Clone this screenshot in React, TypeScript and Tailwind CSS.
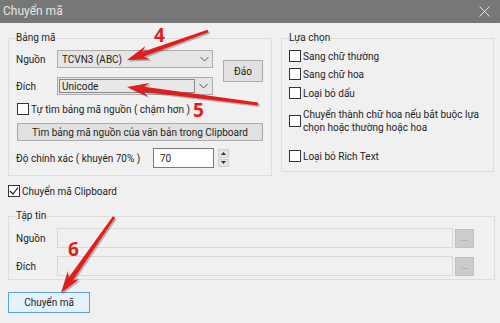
import React from "react";

function arrowPoints(
  x1: number, y1: number, x2: number, y2: number,
  w1: number, w2: number, hl: number, hw: number, notch: number
) {
  const dx = x2 - x1, dy = y2 - y1;
  const L = Math.hypot(dx, dy);
  const ux = dx / L, uy = dy / L;
  const nx = -uy, ny = ux;
  const bx = x2 - ux * hl, by = y2 - uy * hl;
  const kx = bx + ux * notch, ky = by + uy * notch;
  const p = (x: number, y: number) => `${x.toFixed(1)},${y.toFixed(1)}`;
  return [
    p(x1 + nx * w1 / 2, y1 + ny * w1 / 2),
    p(kx + nx * w2 / 2, ky + ny * w2 / 2),
    p(bx + nx * hw / 2, by + ny * hw / 2),
    p(x2, y2),
    p(bx - nx * hw / 2, by - ny * hw / 2),
    p(kx - nx * w2 / 2, ky - ny * w2 / 2),
    p(x1 - nx * w1 / 2, y1 - ny * w1 / 2),
  ].join(" ");
}

function Arrow({ x1, y1, x2, y2 }: { x1: number; y1: number; x2: number; y2: number }) {
  const pts = arrowPoints(x1, y1, x2, y2, 2.8, 5, 22, 14, 5);
  const sh = arrowPoints(x1 + 1.5, y1 + 1.5, x2 + 1.5, y2 + 1.5, 2.8, 5, 22, 14, 5);
  return (
    <g>
      <polygon points={sh} fill="#000" opacity={0.25} />
      <polygon points={pts} fill="#e21d1d" />
    </g>
  );
}

function Chevron() {
  return (
    <svg width="9" height="6" viewBox="0 0 9 6">
      <polyline points="0.5,1 4.5,5 8.5,1" fill="none" stroke="#555" strokeWidth="1" />
    </svg>
  );
}

function Checkbox({ checked = false }: { checked?: boolean }) {
  return (
    <div className="w-[12px] h-[12px] shrink-0 border border-[#333] bg-white flex items-center justify-center">
      {checked && (
        <svg width="10" height="10" viewBox="0 0 10 10">
          <polyline points="1,5 4,8 9,1.5" fill="none" stroke="#222" strokeWidth="1.2" />
        </svg>
      )}
    </div>
  );
}

export default function App() {
  return (
    <div className="relative w-[500px] h-[323px] overflow-hidden bg-[#f0f0f0] font-['Roboto',sans-serif] text-[10px] leading-[13px] text-[#1e1e1e] whitespace-nowrap">
      {/* Title bar */}
      <div className="h-[23px] bg-[#777777] flex items-center justify-between pl-[3px] pr-[10px]">
        <span className="text-[12px] text-[#e6e6e6]">Chuyển mã</span>
        <svg width="11" height="11" viewBox="0 0 11 11">
          <line x1="0.5" y1="0.5" x2="10.5" y2="10.5" stroke="#e6e6e6" strokeWidth="1" />
          <line x1="10.5" y1="0.5" x2="0.5" y2="10.5" stroke="#e6e6e6" strokeWidth="1" />
        </svg>
      </div>

      <div className="pl-[8px] pt-[8px]">
        <div className="flex gap-[9px] items-start">
          {/* Bảng mã */}
          <fieldset className="w-[264px] border border-[#dcdcdc] pl-[7px] pb-[7px]">
            <legend className="leading-[14px]">Bảng mã</legend>
            <div className="flex mt-[5px]">
              <div className="flex flex-col gap-[9px]">
                <div className="flex items-center h-[18px]">
                  <span className="w-[41px]">Nguồn</span>
                  <div className="w-[156px] h-[18px] border border-[#adadad] bg-[#e5e5e5] flex items-center pl-[4px] pr-[3px] justify-between">
                    <span>TCVN3 (ABC)</span>
                    <Chevron />
                  </div>
                </div>
                <div className="flex items-center h-[18px]">
                  <span className="w-[41px]">Đích</span>
                  <div className="w-[156px] h-[18px] border border-[#adadad] bg-[#e5e5e5] flex items-center p-[1px]">
                    <div className="w-[136px] h-full border border-[#8a8a8a] bg-[#e8e8e8] flex items-center pl-[2px]">
                      Unicode
                    </div>
                    <div className="flex-1 flex items-center justify-center">
                      <Chevron />
                    </div>
                  </div>
                </div>
              </div>
              <div className="ml-[10px] mt-[10px] w-[40px] h-[22px] border border-[#adadad] bg-[#e1e1e1] flex items-center justify-center">
                Đảo
              </div>
            </div>
            <div className="flex items-center gap-[2px] mt-[8px] ml-[1px] h-[12px]">
              <Checkbox />
              <span>Tự tìm bảng mã nguồn ( chậm hơn )</span>
            </div>
            <div className="mt-[8px] ml-[1px] w-[246px] h-[18px] border border-[#adadad] bg-[#e1e1e1] flex items-center justify-center">
              Tìm bảng mã nguồn của văn bản trong Clipboard
            </div>
            <div className="flex items-center mt-[7px] h-[20px]">
              <span className="w-[137px]">Độ chính xác ( khuyên 70% )</span>
              <div className="w-[61px] h-[20px] border border-[#7a7a7a] bg-white flex items-center pl-[6px]">70</div>
              <div className="ml-[4px] w-[11px] h-[18px] flex flex-col gap-[1px]">
                <div className="flex-1 bg-[#e3e3e3] border border-[#cfcfcf] flex items-center justify-center">
                  <svg width="5" height="3" viewBox="0 0 5 3"><polygon points="0,3 2.5,0 5,3" fill="#333" /></svg>
                </div>
                <div className="flex-1 bg-[#e3e3e3] border border-[#cfcfcf] flex items-center justify-center">
                  <svg width="5" height="3" viewBox="0 0 5 3"><polygon points="0,0 2.5,3 5,0" fill="#333" /></svg>
                </div>
              </div>
            </div>
          </fieldset>

          {/* Lựa chọn */}
          <fieldset className="w-[213px] border border-[#dcdcdc] pl-[7px] pb-[9px]">
            <legend className="leading-[14px]">Lựa chọn</legend>
            <div className="flex items-center gap-[2px] mt-[5px] h-[12px]">
              <Checkbox />
              <span>Sang chữ thường</span>
            </div>
            <div className="flex items-center gap-[2px] mt-[6px] h-[12px]">
              <Checkbox />
              <span>Sang chữ hoa</span>
            </div>
            <div className="flex items-center gap-[2px] mt-[7px] h-[12px]">
              <Checkbox />
              <span>Loại bỏ dấu</span>
            </div>
            <div className="flex items-center gap-[2px] mt-[9px]">
              <Checkbox />
              <span>
                Chuyển thành chữ hoa nếu bắt buộc lựa
                <br />
                chọn hoặc thường hoặc hoa
              </span>
            </div>
            <div className="flex items-center gap-[2px] mt-[16px] h-[12px]">
              <Checkbox />
              <span>Loại bỏ Rich Text</span>
            </div>
          </fieldset>
        </div>

        <div className="flex items-center gap-[2px] mt-[9px] h-[12px]">
          <Checkbox checked />
          <span>Chuyển mã Clipboard</span>
        </div>

        {/* Tập tin */}
        <fieldset className="mt-[12px] w-[487px] border border-[#dcdcdc] pl-[7px] pb-[3px]">
          <legend className="leading-[14px]">Tập tin</legend>
          <div className="flex items-center mt-[5px] h-[20px]">
            <span className="w-[41px]">Nguồn</span>
            <div className="w-[396px] h-[20px] border border-[#d9d9d9] bg-[#f0f0f0]" />
            <div className="ml-[2px] w-[19px] h-[19px] bg-[#cccccc] border border-[#c0c0c0] flex items-center justify-center text-[9px] text-[#777] leading-none">
              ...
            </div>
          </div>
          <div className="flex items-center mt-[8px] h-[20px]">
            <span className="w-[41px]">Đích</span>
            <div className="w-[396px] h-[20px] border border-[#d9d9d9] bg-[#f0f0f0]" />
            <div className="ml-[2px] w-[19px] h-[19px] bg-[#cccccc] border border-[#c0c0c0] flex items-center justify-center text-[9px] text-[#777] leading-none">
              ...
            </div>
          </div>
        </fieldset>

        <div className="mt-[12px] w-[82px] h-[21px] border border-[#5d9fd9] bg-[#e5f1fb] flex items-center justify-center">
          Chuyển mã
        </div>
      </div>

      {/* Annotation arrows */}
      <svg className="absolute inset-0 pointer-events-none" width="500" height="323" viewBox="0 0 500 323">
        <Arrow x1={208} y1={31} x2={127} y2={60} />
        <Arrow x1={258} y1={104} x2={127} y2={87} />
        <Arrow x1={114} y1={217} x2={61} y2={293} />
        <text x="154" y="42" fontSize="19" fontWeight="700" fill="#e21d1d" fontFamily="Noto Sans, sans-serif">4</text>
        <text x="193" y="117" fontSize="19" fontWeight="700" fill="#e21d1d" fontFamily="Noto Sans, sans-serif">5</text>
        <text x="68" y="256" fontSize="19" fontWeight="700" fill="#e21d1d" fontFamily="Noto Sans, sans-serif">6</text>
      </svg>
    </div>
  );
}
